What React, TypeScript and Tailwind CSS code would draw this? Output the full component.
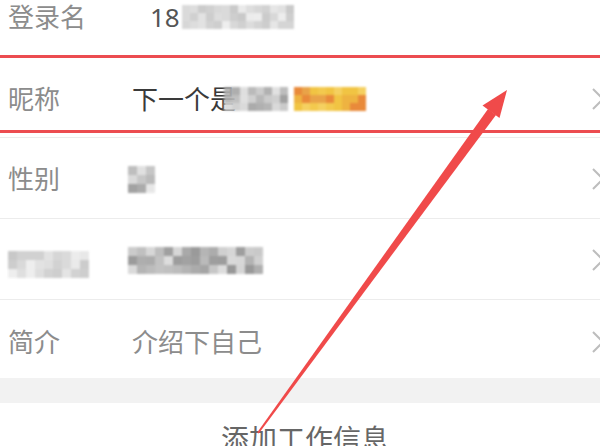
import React from "react";

function rand(seed: number) {
  let s = seed;
  return () => {
    s = (s * 9301 + 49297) % 233280;
    return s / 233280;
  };
}

function Mosaic({ cols, rows, cell, seed, light = 200, dark = 150, palette }: { cols: number; rows: number; cell: number; seed: number; light?: number; dark?: number; palette?: string[] }) {
  const r = rand(seed);
  const cells = [] as React.ReactNode[];
  for (let i = 0; i < cols * rows; i++) {
    let c: string;
    if (palette) {
      c = palette[Math.floor(r() * palette.length)];
    } else {
      const v = Math.round(dark + (light - dark) * r());
      c = `rgb(${v},${v},${v})`;
    }
    cells.push(<div key={i} style={{ width: cell, height: cell, background: c }} />);
  }
  return (
    <div className="grid blur-[1px]" style={{ gridTemplateColumns: `repeat(${cols}, ${cell}px)` }}>
      {cells}
    </div>
  );
}

function Chevron() {
  return (
    <svg width="14" height="24" viewBox="0 0 14 24" className="shrink-0 -mr-[5px]">
      <path d="M2 2 L12 12 L2 22" fill="none" stroke="#bdbdbd" strokeWidth="2" />
    </svg>
  );
}

export default function App() {
  return (
    <div
      className="relative w-[600px] h-[446px] overflow-hidden bg-white"
      style={{ fontFamily: '"Noto Sans", "Noto Sans CJK SC", sans-serif' }}
    >
      <div className="flex flex-col -mt-[24px]">
        {/* 登录名 */}
        <div className="flex items-center h-[81px] border-b border-[#ececec] pt-[2px]">
          <span className="w-[132px] pl-[8px] text-[26px] leading-none text-[#8c8c8c]">登录名</span>
          <span className="flex items-center">
            <span className="text-[26px] leading-none text-[#555] ml-[18px]">18</span>
            <span className="ml-[2px] opacity-80">
              <Mosaic cols={14} rows={3} cell={8} seed={7} light={235} dark={185} />
            </span>
          </span>
        </div>
        {/* 昵称 */}
        <div className="flex items-center justify-between h-[81px] border-b border-[#ececec] pt-[3px]">
          <div className="flex items-center">
            <span className="w-[132px] pl-[8px] text-[26px] leading-none text-[#8c8c8c]">昵称</span>
            <span className="text-[26px] leading-none text-[#3a3a3a]">下一个是</span>
            <span className="-ml-[12px] opacity-90">
              <Mosaic cols={8} rows={3} cell={8} seed={3} light={225} dark={150} />
            </span>
            <span className="ml-[6px]">
              <Mosaic
                cols={9}
                rows={3}
                cell={8}
                seed={11}
                palette={["#f3c94e", "#f1c443", "#eeb341", "#e98a3a", "#f5d060", "#e9a348"]}
              />
            </span>
          </div>
          <Chevron />
        </div>
        {/* 性别 */}
        <div className="flex items-center justify-between h-[81px] border-b border-[#ececec] pt-[2px]">
          <div className="flex items-center">
            <span className="w-[128px] pl-[8px] text-[26px] leading-none text-[#8c8c8c]">性别</span>
            <span className="opacity-90">
              <Mosaic cols={3} rows={3} cell={9} seed={5} light={230} dark={150} />
            </span>
          </div>
          <Chevron />
        </div>
        {/* blurred row */}
        <div className="flex items-center justify-between h-[81px] border-b border-[#ececec] pt-[2px]">
          <div className="flex items-center">
            <span className="w-[128px] pl-[8px]">
              <span className="inline-block opacity-80">
                <Mosaic cols={9} rows={3} cell={9} seed={21} light={235} dark={185} />
              </span>
            </span>
            <span className="opacity-90">
              <Mosaic cols={15} rows={3} cell={9} seed={13} light={220} dark={140} />
            </span>
          </div>
          <Chevron />
        </div>
        {/* 简介 */}
        <div className="flex items-center justify-between h-[78px] pt-[6px]">
          <div className="flex items-center">
            <span className="w-[132px] pl-[8px] text-[26px] leading-none text-[#8c8c8c]">简介</span>
            <span className="text-[26px] leading-none text-[#8c8c8c]">介绍下自己</span>
          </div>
          <Chevron />
        </div>
        <div className="h-[25px] bg-[#f2f2f2]" />
        <div className="flex justify-center pt-[22px] pl-[10px]">
          <span className="text-[28px] leading-none text-[#666]">添加工作信息</span>
        </div>
      </div>

      {/* red highlight box */}
      <div className="absolute left-[-4px] right-[-4px] top-[55px] h-[78px] border-[3px] border-[#ec4c50]" />

      {/* arrow */}
      <svg className="absolute inset-0" width="600" height="446" viewBox="0 0 600 446">
        <polygon points="496,115 488,109 257.2,432.4 258.8,433.6" fill="#f04a4a" />
        <polygon points="507,90 499.5,118 482.5,105.5" fill="#f04a4a" />
      </svg>
    </div>
  );
}
